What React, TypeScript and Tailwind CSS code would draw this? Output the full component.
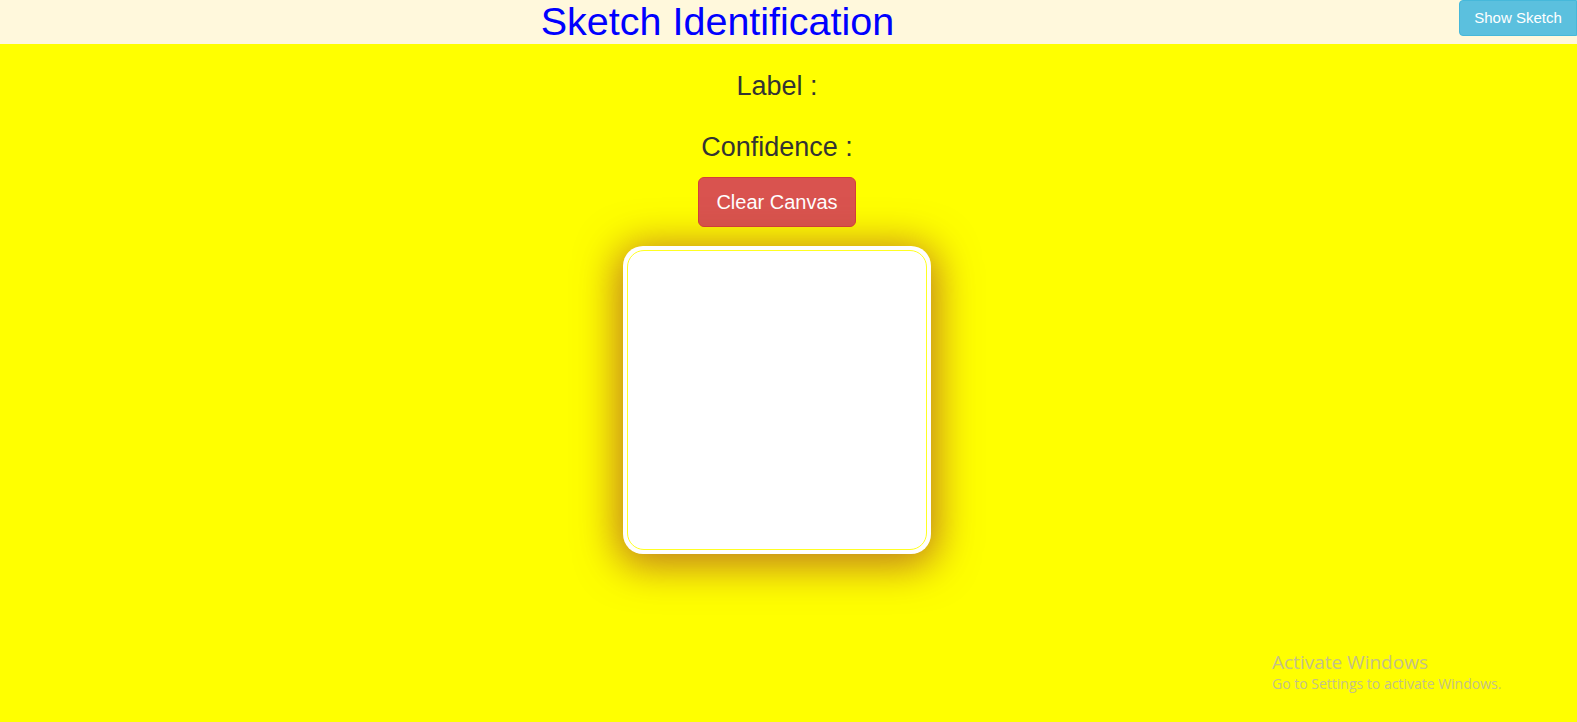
import React from "react";

const Header = () => (
  <div className="flex h-[44px] bg-[#fff8dc]">
    <div className="flex-1 flex items-center justify-center pr-[24px]">
      <h1 className="text-[39.5px] leading-none text-[#0000ff] font-['Liberation_Sans',Arial,sans-serif]">
        Sketch Identification
      </h1>
    </div>
    <div className="flex items-start">
      <button className="h-[36px] w-[118px] rounded-l-[4px] border border-[#46b8da] bg-[#5bc0de] text-[15px] text-white font-['Liberation_Sans',Arial,sans-serif]">
        Show Sketch
      </button>
    </div>
  </div>
);

const SketchPad = () => (
  <div className="w-[308px] h-[308px] rounded-[20px] bg-white p-[4px] shadow-[0_6px_40px_6px_rgba(170,80,40,0.75)]">
    <div className="h-full w-full rounded-[17px] border border-[#ffff22] bg-white" />
  </div>
);

export default function App() {
  return (
    <div className="relative min-h-[722px] bg-[#ffff00] font-['Liberation_Sans',Arial,sans-serif]">
      <Header />
      <div className="flex flex-col items-center pr-[23px] pt-[27px] text-[#333333]">
        <h3 className="text-[27px] leading-[30px]">Label :</h3>
        <h3 className="mt-[31px] text-[27px] leading-[30px]">Confidence :</h3>
        <button className="mt-[15px] h-[50px] w-[158px] rounded-[6px] border border-[#d43f3a] bg-[#d9534f] text-[20px] text-white">
          Clear Canvas
        </button>
        <div className="mt-[19px]">
          <SketchPad />
        </div>
      </div>
      <div className="absolute left-[1272px] top-[650px] font-['Open_Sans',sans-serif] text-[#c5c18a]">
        <div className="text-[19px] leading-[24px]">Activate Windows</div>
        <div className="text-[14px] leading-[20px]">Go to Settings to activate Windows.</div>
      </div>
    </div>
  );
}
